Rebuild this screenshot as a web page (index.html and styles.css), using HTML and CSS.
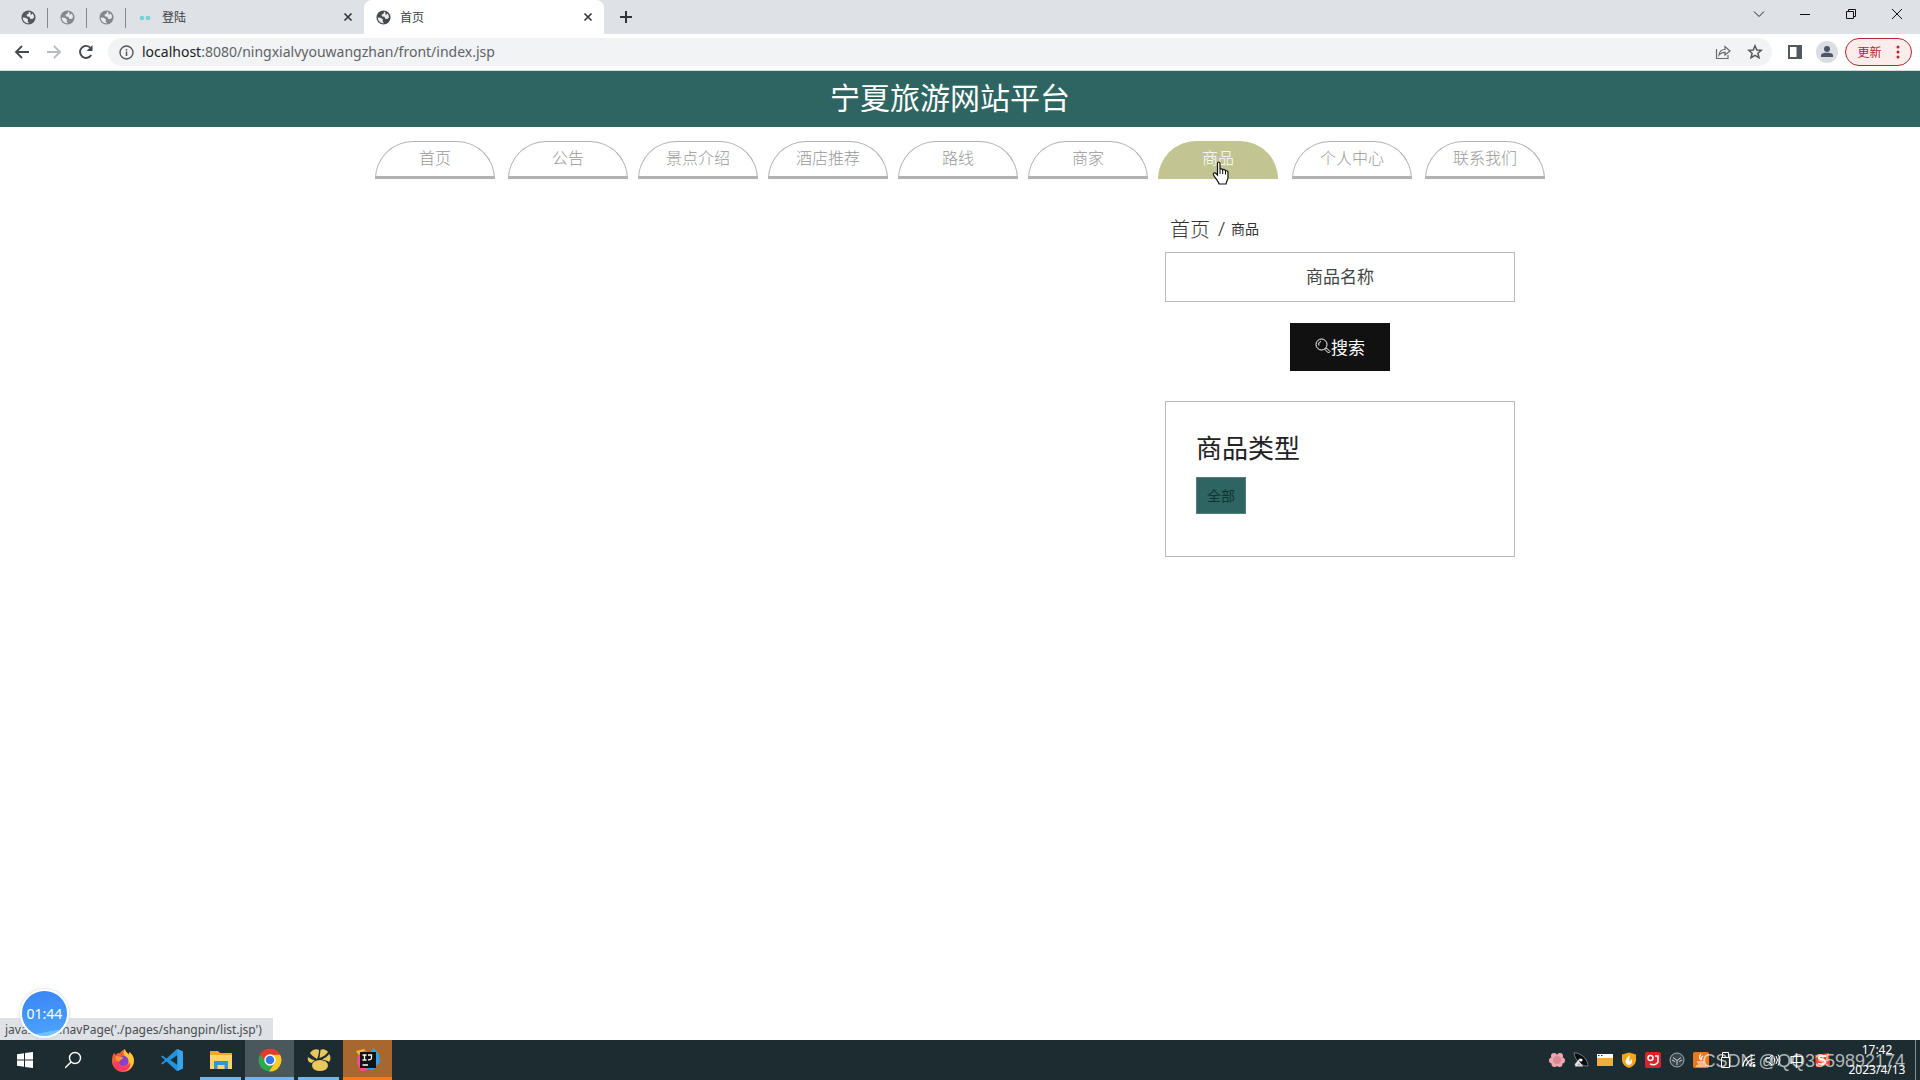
FILE: index.html
```html
<!DOCTYPE html>
<html lang="zh-CN">
<head>
<meta charset="utf-8">
<title>首页</title>
<link rel="stylesheet" href="styles.css">
</head>
<body>
<svg class="defs" aria-hidden="true">
  <symbol id="globe" viewBox="0 0 16 16">
    <circle cx="8" cy="8" r="7.5" fill="currentColor"/>
    <path d="M1.800 8 5 8.300 7.500 10 7 12 8.500 14.200A6.200 6.200 0 0 1 1.800 8z M8.500 1.900 8 4 5.800 5 6.500 7 9 7.200 9.800 9.200 12 9.600 13.800 8.200A6 6 0 0 0 12.500 3.800L10.500 5.200 9.800 2.200z" fill="#e8eaed"/>
  </symbol>
  <symbol id="cross" viewBox="0 0 10 10"><path d="M1.5 1.5 8.5 8.5M8.5 1.5 1.5 8.5" stroke="currentColor" stroke-width="1.6"/></symbol>
</svg>

<header class="browser">
  <div class="tabs">
    <button class="pin pin-dark" aria-label="标签页"><svg class="i15"><use href="#globe"/></svg></button>
    <button class="pin" aria-label="标签页"><svg class="i15"><use href="#globe"/></svg></button>
    <button class="pin" aria-label="标签页"><svg class="i15"><use href="#globe"/></svg></button>
    <div class="tab">
      <svg class="i15" viewBox="0 0 15 15"><circle cx="4" cy="8" r="2.3" fill="#6fd6d6"/><circle cx="10" cy="8" r="2.3" fill="#6fd6d6"/></svg>
      <span class="tab-name">登陆</span>
      <button class="x" aria-label="关闭"><svg class="i10"><use href="#cross"/></svg></button>
    </div>
    <div class="tab tab-on">
      <svg class="i15"><use href="#globe"/></svg>
      <span class="tab-name">首页</span>
      <button class="x" aria-label="关闭"><svg class="i10"><use href="#cross"/></svg></button>
    </div>
    <button class="plus" aria-label="新标签页"><svg width="12" height="12" viewBox="0 0 12 12"><path d="M6 0V12M0 6H12" stroke="#333" stroke-width="2"/></svg></button>
    <div class="win">
      <button aria-label="搜索标签页"><svg width="12" height="12" viewBox="0 0 12 12" fill="none" stroke="#222"><path d="M1 3.500 6 8.500 11 3.500"/></svg></button>
      <button aria-label="最小化"><svg width="12" height="12" viewBox="0 0 12 12"><path d="M1 6.500H11" stroke="#111"/></svg></button>
      <button aria-label="还原"><svg width="12" height="12" viewBox="0 0 12 12" fill="none" stroke="#111"><path d="M1.500 3.500H8.500V10.500H1.500zM3.500 3.500V1.500H10.500V8.500H8.500"/></svg></button>
      <button aria-label="关闭窗口"><svg width="12" height="12" viewBox="0 0 12 12"><path d="M1 1 11 11M11 1 1 11" stroke="#111"/></svg></button>
    </div>
  </div>
  <div class="toolbar">
    <button class="tool" aria-label="后退"><svg width="16" height="16" viewBox="0 0 16 16" fill="none" stroke="#45494d" stroke-width="1.800"><path d="M15 8H2M8 2 2 8 8 14"/></svg></button>
    <button class="tool" aria-label="前进"><svg width="16" height="16" viewBox="0 0 16 16" fill="none" stroke="#b9bcbf" stroke-width="1.800"><path d="M1 8H14M8 2 14 8 8 14"/></svg></button>
    <button class="tool" aria-label="重新加载"><svg width="16" height="16" viewBox="0 0 16 16"><path d="M13.200 11A6 6 0 1 1 12.600 4" fill="none" stroke="#45494d" stroke-width="1.900"/><path d="M14.500 1V7H8.500z" fill="#45494d"/></svg></button>
    <div class="omnibox">
      <svg class="i15" viewBox="0 0 15 15"><circle cx="7.500" cy="7.500" r="6.500" fill="none" stroke="#55585c" stroke-width="1.400"/><path d="M7.500 6.500V11M7.500 4V5.500" stroke="#55585c" stroke-width="1.500"/></svg>
      <span class="url"><b>localhost</b>:8080/ningxialvyouwangzhan/front/index.jsp</span>
      <button aria-label="分享"><svg width="16" height="16" viewBox="0 0 16 16" fill="none" stroke="#66696d" stroke-width="1.200"><path d="M1.500 5V14.500H13V11M4 11C4.500 7 7 5.500 10 5.500V2.500L15 7 10 11V8.300C7.500 8.300 5.500 9 4 11z"/></svg></button>
      <button aria-label="收藏"><svg width="16" height="16" viewBox="0 0 16 16" fill="none" stroke="#55585c" stroke-width="1.500"><path d="M8 1.800 9.800 6 14.300 6.300 10.900 9.200 12 13.700 8 11.300 4 13.700 5.100 9.200 1.700 6.300 6.200 6z"/></svg></button>
    </div>
    <button class="tool side" aria-label="侧边栏"><svg width="14" height="14" viewBox="0 0 14 14"><path d="M1 1H13V13H1z" fill="none" stroke="#55585c" stroke-width="2"/><path d="M8.500 1H13V13H8.500z" fill="#55585c"/></svg></button>
    <button class="tool" aria-label="用户"><svg width="22" height="22" viewBox="0 0 22 22"><circle cx="11" cy="11" r="11" fill="#dadde4"/><circle cx="11" cy="8" r="3" fill="#4c5566"/><path d="M5 16V14.500C5 12 9 11.800 11 11.800S17 12 17 14.500V16z" fill="#4c5566"/></svg></button>
    <button class="update">更新<svg width="4" height="14" viewBox="0 0 4 14" fill="#b3262e"><circle cx="2" cy="2" r="1.500"/><circle cx="2" cy="7" r="1.500"/><circle cx="2" cy="12" r="1.500"/></svg></button>
  </div>
</header>

<main class="page">
  <h1 class="banner">宁夏旅游网站平台</h1>
  <nav class="nav">
    <a href="#">首页</a>
    <div class="nav-mid">
      <a href="#">公告</a>
      <a href="#">景点介绍</a>
      <a href="#">酒店推荐</a>
      <a href="#">路线</a>
      <a href="#">商家</a>
      <a href="#" class="on">商品<svg class="hand" width="18" height="24" viewBox="0 0 18 24"><path d="M5.500 2.500C5.500 .5 8 .5 8 2.500V8.500C8.500 7.500 10.500 7.700 10.700 9 11.500 8 13.300 8.500 13.500 10 14.500 9.300 16 10 16 11.500V16C16 19 14.500 20 14 23H7C6.500 20 3 17 1.500 14 .8 12.200 2.800 11.200 4 12.500L5.500 14z" fill="#fff" stroke="#111" stroke-width="1.200"/><path d="M8 8.500V13M10.700 9V13M13.500 10V13.500" stroke="#111"/></svg></a>
    </div>
    <a href="#">个人中心</a>
    <a href="#">联系我们</a>
  </nav>
  <div class="content">
    <aside class="aside">
      <div class="crumb"><a href="#">首页</a><span class="slash">/</span><span class="here">商品</span></div>
      <form class="search">
        <input type="text" placeholder="商品名称" aria-label="商品名称">
        <button type="button"><svg width="16" height="16" viewBox="0 0 16 16" fill="none" stroke="#fff"><circle cx="6.500" cy="6.500" r="5.500"/><path d="M4 7.500A3 3 0 0 1 6 3.500M10 11.500 11.500 10 15 13.500 13.500 15z"/></svg>搜索</button>
      </form>
      <section class="types">
        <h2>商品类型</h2>
        <a href="#" class="tag">全部</a>
      </section>
    </aside>
  </div>
  <div class="status">javascript:navPage('./pages/shangpin/list.jsp')</div>
  <div class="timer">01:44</div>
</main>

<footer class="taskbar">
  <button class="task" aria-label="开始"><svg width="16" height="16" viewBox="0 0 16 16" fill="#fff"><path d="M0 2.200 7 1.200V7.500H0zM8 1 16 0V7.500H8zM0 8.500H7V14.800L0 13.800zM8 8.500H16V16L8 15z"/></svg></button>
  <button class="task" aria-label="搜索"><svg width="18" height="18" viewBox="0 0 18 18" fill="none" stroke="#fff" stroke-width="1.400"><circle cx="10" cy="7" r="5.500"/><path d="M6 11 0 17"/></svg></button>
  <button class="task" aria-label="Firefox"><svg width="24" height="24" viewBox="0 0 24 24"><path d="M3 5 5 7C6 5 8 5 9 5 10 3 12 2 14 1 14 4 17 5 18 6L18.500 4C21 6 23 9 23 13A11 11 0 0 1 1 13C1 10 1.500 7 3 5z" fill="#ff5a36"/><path d="M14 1C14 4 17 5 18 7L18.500 4C22 7 23 10 23 13 22 20 17 23 12 23 19 20 19 12 14 8 12 6 12 3 14 1z" fill="#ffc933"/><path d="M2 14C3 21 8 23.500 13 23 18 22 20 18 19 14 17 20 8 20 7 14z" fill="#ff3a68"/><circle cx="12.500" cy="13" r="5" fill="#8a3fc8"/><path d="M5 8C8 8 9 9 12 9.500 12 12 9 11 8 14 5 12 4 11 5 8z" fill="#ff9a2e"/></svg></button>
  <button class="task" aria-label="VS Code"><svg width="24" height="24" viewBox="0 0 24 24"><path d="M17 1 6.500 10.500 2.500 7.500 1 8.500 5 12 1 15.500 2.500 16.500 6.500 13.500 17 23 23 20.500V3.500zM17.500 7V17L10.500 12z" fill="#2492dc" fill-rule="evenodd"/><path d="M17.500 1 23 3.500V20.500L17.500 23z" fill="#35a5ee"/></svg></button>
  <button class="task open" aria-label="文件资源管理器"><svg width="22" height="20" viewBox="0 0 22 20"><path d="M0 1H8L10 3H22V19H0z" fill="#e8a92c"/><path d="M0 5H22V19H0z" fill="#fbd667"/><path d="M4 19V11H18V19H14.500V15H7.500V19z" fill="#3b91d6"/></svg></button>
  <button class="task open wide" aria-label="Chrome"><svg width="24" height="24" viewBox="0 0 24 24"><path d="M12 12 2 6.500A11.500 11.500 0 0 1 22 6.500z" fill="#e33b2e"/><path d="M12 12 2 6.500A11.500 11.500 0 0 0 11 23.500L16 15z" fill="#2da94f"/><path d="M12 12 12 6.500H22A11.500 11.500 0 0 1 11 23.500L17 14z" fill="#fdc921"/><path d="M12 6.500H22A11.500 11.500 0 0 0 2 6.500L7 13z" fill="#e33b2e"/><circle cx="12" cy="12" r="5.700" fill="#fff"/><circle cx="12" cy="12" r="4.300" fill="#3478e8"/></svg></button>
  <button class="task open" aria-label="Navicat"><svg width="24" height="24" viewBox="0 0 24 24" fill="#e8c85a"><ellipse cx="13" cy="17.500" rx="8" ry="5.500"/><path d="M10 11C7 9 4 7 3 5 5 2 9 0 12 2 12 6 11 9 10 11zM12.500 10 13.500 2C16 0 20 2 21 4 19 7 16 9 12.500 10zM15 11.500C18 10 21 8 22 6 24 8 24 12 22 14 20 12.500 18 12 15 11.500zM8 12C5 12 3 10 1 9 0 12 2 15 5 15 5.500 14 6.500 13 8 12z"/></svg></button>
  <button class="task open idea" aria-label="IntelliJ IDEA"><svg width="24" height="24" viewBox="0 0 24 24"><path d="M0 3 8 1 13 6 6 13z" fill="#ffb52e"/><path d="M2 7 10 2 12 22 5 23 1 15z" fill="#f24aa0"/><path d="M13 5 18 0 23 6 24 14 17 22 10 20z" fill="#28a5ee"/><path d="M4 4H20V20H4z" fill="#111"/><path d="M6.500 7H10.500M8.500 7V12M6.500 12H10.500M12 7H15.500V10.500Q15 12 12 11.800M6.500 17H12" fill="none" stroke="#fff" stroke-width="1.300"/></svg></button>
  <div class="tray">
    <svg viewBox="0 0 16 16"><g fill="#f4a6b0"><circle cx="5" cy="4" r="3"/><circle cx="11" cy="4" r="3"/><circle cx="13" cy="8.500" r="3"/><circle cx="10.500" cy="12" r="3"/><circle cx="5.500" cy="12" r="3"/><circle cx="3" cy="8.500" r="3"/></g><circle cx="8" cy="8" r="4" fill="#d58b98"/></svg>
    <svg viewBox="0 0 16 16"><path d="M1 1C6 0 15 6 15 14 10 15 2 9 1 1z" fill="#080c0e" stroke="#889" stroke-width=".8"/><path d="M2 13 7 7M3 14H9L6 10z" stroke="#e5e8e8" fill="#aab" stroke-width="1.200"/><circle cx="8" cy="8" r="1.500" fill="#fff"/></svg>
    <svg viewBox="0 0 16 16"><path d="M0 2H16V6H0z" fill="#fff"/><path d="M1 3.500H2.500M4 3.500H5.500" stroke="#333"/><path d="M0 6H16V14H0z" fill="#f2ab3e"/></svg>
    <svg viewBox="0 0 16 16"><path d="M1 2.500 8 .5 15 2.500V9Q14 14 8 16 2 14 1 9z" fill="#f4a51c"/><path d="M9 3Q5 6 4.500 9 5 13 8 13 12 12 11 7 9 8 9 10 7.500 7 9 3z" fill="#fff"/></svg>
    <svg viewBox="0 0 16 16"><rect width="16" height="16" rx="2" fill="#d8232a"/><g fill="none" stroke="#fff" stroke-width="1.500"><circle cx="5.500" cy="6" r="2.500"/><path d="M10 4H13V10Q11 14 5 12"/></g></svg>
    <svg viewBox="0 0 16 16"><circle cx="8" cy="8" r="7" fill="#39454a" stroke="#a7afb2"/><path d="M8 13V8.500L4 5.500M8 8.500 12 5.500M3 8 6 9.500M13 8 10 9.500" stroke="#d0d5d6" fill="none"/></svg>
    <svg viewBox="0 0 16 16"><rect width="16" height="16" rx="2" fill="#e97720"/><path d="M8 2Q5 5 8 8M10 4Q7 6 9 8M4 10H11M5 12H11M3 14H13" stroke="#fff" fill="none" stroke-width="1.200"/></svg>
    <svg viewBox="0 0 16 16" fill="none" stroke="#fff"><path d="M5.500 .5H11.500V5.500H5.500zM4.500 5.500H12.500V15.500H4.500z"/></svg>
    <svg viewBox="0 0 16 16" fill="none" stroke="#fff" stroke-width="1.200"><path d="M2 14A12 12 0 0 1 14 3M5 14A9 9 0 0 1 14 7M8.500 14A6 6 0 0 1 14 10.500"/><circle cx="13" cy="13.500" r="1" fill="#fff"/></svg>
    <svg viewBox="0 0 16 16" fill="none" stroke="#fff"><path d="M1 6H4L7 3V13L4 10H1zM9 6Q10.500 8 9 10M11 4Q14 8 11 12M13 2.500Q17 8 13 13.500"/></svg>
    <span class="ime">中</span>
    <svg viewBox="0 0 16 16"><path d="M1 3 15 1 16 13 2 15z" fill="#ef4a25"/><path d="M12 4Q4 3 5 6.500 12 8 11.500 10.500 10 13 4 11.500" fill="none" stroke="#fff" stroke-width="1.800"/></svg>
  </div>
  <div class="clock"><span>17:42</span><span>2023/4/13</span></div>
  <div class="mark">CSDN @QQ3359892174</div>
</footer>
</body>
</html>
```
FILE: styles.css
```css
* { box-sizing: border-box; }
body {
  margin: 0;
  min-height: 100vh;
  display: flex;
  flex-direction: column;
  background: #fff;
  color: #333;
  font-family: "Noto Sans", "Noto Sans CJK SC", sans-serif;
}
button { border: 0; padding: 0; background: none; font-family: inherit; color: inherit; display: flex; align-items: center; justify-content: center; }
a { color: inherit; text-decoration: none; }
svg { flex: none; }
.defs { position: absolute; width: 0; height: 0; }
.i15 { width: 15px; height: 15px; }
.i10 { width: 10px; height: 10px; }

/* browser window */
.tabs { display: flex; height: 34px; padding-left: 8px; background: #dee1e6; font-size: 12px; }
.pin { width: 39px; color: #85888c; position: relative; }
.pin::after { content: ""; position: absolute; right: 0; top: 8px; width: 1px; height: 20px; background: #85888c; }
.pin-dark { width: 40px; color: #54575b; }
.tab { width: 238px; display: flex; align-items: center; gap: 9px; padding: 0 11px 0 12px; }
.tab-on { width: 240px; background: #fff; border-radius: 8px 8px 0 0; color: #45494d; }
.tab-name { flex: 1; color: #3c4043; }
.x { width: 10px; height: 16px; color: #333; }
.plus { width: 44px; }
.win { margin-left: auto; display: flex; height: 28px; }
.win button { width: 46px; }
.toolbar { display: flex; align-items: center; height: 37px; padding: 0 8px 0 6px; border-bottom: 1px solid #cfdcda; }
.tool { width: 32px; height: 28px; }
.side { margin-left: 7px; }
.omnibox { flex: 1; display: flex; align-items: center; height: 28px; padding: 0 9px 0 11px; margin-left: 6px; border-radius: 14px; background: #f1f3f4; }
.omnibox button { width: 16px; height: 16px; margin-left: 16px; }
.url { flex: 1; margin-left: 8px; font-size: 14px; line-height: 20px; color: #5f6368; }
.url b { font-weight: 400; color: #202124; }
.update { gap: 14px; width: 67px; height: 28px; margin-left: 2px; border: 1px solid #b3262e; border-radius: 14px; background: #fdecec; color: #b3262e; font-size: 12px; }

/* site */
.page { flex: 1; position: relative; }
.banner { margin: 0; height: 56px; padding-right: 20px; background: #2e6461; color: #fff; font-size: 30px; font-weight: 400; line-height: 54px; text-align: center; }
.nav { display: flex; justify-content: center; gap: 13px; padding-top: 14px; }
.nav-mid { display: flex; gap: 10px; padding-right: 1px; }
.nav a { position: relative; width: 120px; height: 38px; border: 1px solid #b2b2b2; border-bottom-width: 3px; border-radius: 40px 40px 0 0; color: #999; font-size: 16px; font-weight: 300; line-height: 32px; text-align: center; }
.nav .on { border-color: #c2c592; background: #c2c592; color: #fff; }
.hand { position: absolute; left: 53px; top: 19px; }
.content { display: flex; justify-content: flex-end; max-width: 1140px; margin: 0 auto; padding: 34px 15px 0; }
.aside { width: 350px; }
.crumb { display: flex; align-items: center; height: 30px; padding-left: 5px; font-size: 20px; font-weight: 300; }
.slash { margin: 0 6px 0 8px; }
.here { font-size: 14px; font-weight: 400; }
.search { display: flex; flex-direction: column; align-items: center; gap: 21px; margin-top: 9px; }
.search input { width: 100%; height: 50px; padding: 0 20px 2px; border: 1px solid #bbb; background: #fff; font-family: inherit; font-size: 17px; text-align: center; }
.search input::placeholder { color: #444; }
.search button { width: 100px; height: 48px; padding-bottom: 2px; background: #111; color: #fff; font-size: 17px; }
.types { margin-top: 30px; height: 156px; padding: 29px 30px; border: 1px solid #bbb; }
.types h2 { margin: 0 0 11px; color: #222; font-size: 26px; font-weight: 400; line-height: 35px; }
.tag { display: block; width: 50px; height: 37px; border: 1px solid #557d79; background: #2e6461; color: #123432; font-size: 14px; line-height: 35px; text-align: center; }
.status { position: absolute; left: 0; bottom: 0; height: 22px; width: 273px; padding-left: 5px; background: #dee1e6; color: #4a4d51; font-size: 12px; line-height: 24px; white-space: nowrap; }
.timer { position: absolute; left: 20px; bottom: 2px; width: 49px; height: 49px; border: 2px solid #fff; border-radius: 50%; background: linear-gradient(170deg, #3b88f7 10%, #4aa0fa 85%, #6cc4fb 86%); box-shadow: 0 0 3px #c3cbd5; color: #fff; font-size: 14px; line-height: 45px; text-align: center; }

/* desktop taskbar */
.taskbar { position: relative; display: flex; height: 40px; background: #1d2c31; color: #fff; }
.task { position: relative; width: 49px; height: 40px; }
.open::after { content: ""; position: absolute; left: 4px; right: 4px; bottom: 0; height: 3px; background: #76b5ec; }
.wide { background: #4a575b; }
.wide::after, .idea::after { left: 0; right: 0; }
.idea { background: #a8672f; }
.idea::after { background: #f67a1c; }
.tray { display: flex; align-items: center; gap: 8px; margin-left: auto; }
.tray svg { width: 16px; height: 16px; }
.ime { width: 17px; font-size: 15px; line-height: 20px; }
.clock { display: flex; flex-direction: column; align-items: center; width: 77px; margin: 0 4px 0 9px; border-right: 1px solid #87908f; font-size: 12px; line-height: 20px; }
.mark { position: absolute; right: 15px; bottom: 7px; color: #ffffffa8; font-family: "Liberation Sans", sans-serif; font-size: 18px; line-height: 24px; }
```
